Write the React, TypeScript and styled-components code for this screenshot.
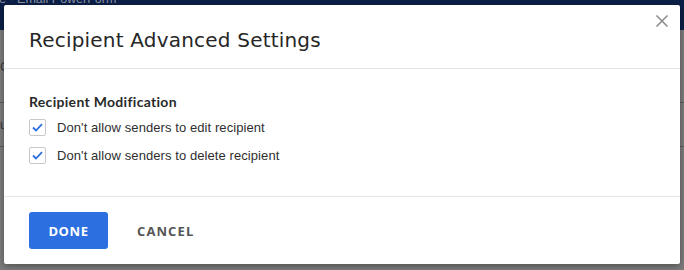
import React from "react";
import styled, { createGlobalStyle } from "styled-components";

const GlobalStyle = createGlobalStyle`
  html, body {
    margin: 0;
    padding: 0;
    width: 684px;
    height: 270px;
    overflow: hidden;
    background: #7a7a7a;
  }
  * {
    box-sizing: border-box;
  }
`;

const Page = styled.div`
  position: relative;
  width: 684px;
  height: 270px;
  overflow: hidden;
`;

const Backdrop = styled.div`
  display: flex;
  flex-direction: column;
  height: 100%;
  background: #7b7b7b;
`;

const TopBar = styled.div`
  height: 30px;
  background: #0c1f47;
  overflow: hidden;
`;

const TopTitle = styled.div`
  margin-top: -8px;
  margin-left: -1px;
  font-family: "Liberation Sans", Arial, sans-serif;
  font-size: 12.5px;
  line-height: 14px;
  color: #8a93a6;
  white-space: nowrap;
`;

const BackRow = styled.div<{ $height: number }>`
  height: ${({ $height }) => $height}px;
  border-bottom: 1px solid #5c5c5c;
  font-family: "Liberation Sans", Arial, sans-serif;
  font-size: 13px;
  color: #3a3a3a;
  display: flex;
  align-items: center;
`;

const Modal = styled.div`
  position: absolute;
  left: 4px;
  top: 5px;
  width: 676px;
  height: 259px;
  background: #ffffff;
  border-radius: 2px;
  box-shadow: 0 2px 6px rgba(0, 0, 0, 0.35);
  display: flex;
  flex-direction: column;
`;

const Header = styled.div`
  height: 64px;
  padding: 0 25px;
  display: flex;
  align-items: center;
  border-bottom: 1px solid #e3e3e3;
`;

const Title = styled.h2`
  margin: 6px 0 0;
  font-family: "DejaVu Sans", sans-serif;
  font-weight: 400;
  font-size: 20px;
  letter-spacing: 0.2px;
  color: #262626;
`;

const CloseButton = styled.button`
  position: absolute;
  top: 9px;
  right: 11px;
  width: 14px;
  height: 14px;
  padding: 0;
  border: none;
  background: none;
  cursor: pointer;
  display: flex;
`;

const Body = styled.div`
  flex: 1;
  padding: 24px 25px 0;
  border-bottom: 1px solid #e6e6e6;
`;

const SectionTitle = styled.div`
  font-family: Lato, sans-serif;
  font-weight: 700;
  font-size: 14px;
  letter-spacing: 0.3px;
  color: #2a2a2a;
  margin-bottom: 3px;
`;

const CheckRow = styled.label`
  display: flex;
  align-items: center;
  gap: 11px;
  height: 28px;
`;

const Box = styled.span`
  width: 17px;
  height: 17px;
  border: 1px solid #c8c8c8;
  border-radius: 2px;
  display: flex;
  align-items: center;
  justify-content: center;
  background: #fff;
`;

const Label = styled.span`
  font-family: "Liberation Sans", Arial, sans-serif;
  font-size: 13px;
  letter-spacing: 0.08px;
  color: #2f2f2f;
`;

const Footer = styled.div`
  height: 67px;
  padding: 0 25px;
  display: flex;
  align-items: center;
  gap: 29px;
`;

const Button = styled.button<{ $primary?: boolean }>`
  height: 37px;
  padding: 0 ${({ $primary }) => ($primary ? "19px" : "0")};
  min-width: ${({ $primary }) => ($primary ? "79px" : "0")};
  border: none;
  border-radius: 3px;
  background: ${({ $primary }) => ($primary ? "#2b6fe0" : "transparent")};
  color: ${({ $primary }) => ($primary ? "#ffffff" : "#555555")};
  font-family: "Open Sans", sans-serif;
  font-weight: 700;
  font-size: 13px;
  letter-spacing: ${({ $primary }) => ($primary ? "0.6px" : "1.1px")};
  cursor: pointer;
`;

function Check() {
  return (
    <Box>
      <svg width="11" height="9" viewBox="0 0 11 9">
        <path d="M1 4.5 L4 7.5 L10 1.2" fill="none" stroke="#2b6fe0" strokeWidth="1.8" />
      </svg>
    </Box>
  );
}

export default function App() {
  return (
    <Page>
      <GlobalStyle />
      <Backdrop>
        <TopBar>
          <TopTitle>e - Email PowerForm</TopTitle>
        </TopBar>
        <BackRow $height={73}>C</BackRow>
        <BackRow $height={44}>u</BackRow>
      </Backdrop>
      <Modal>
        <CloseButton aria-label="Close">
          <svg width="14" height="14" viewBox="0 0 14 14">
            <path d="M1.5 1.5 L12.5 12.5 M12.5 1.5 L1.5 12.5" stroke="#8a8a8a" strokeWidth="1.5" />
          </svg>
        </CloseButton>
        <Header>
          <Title>Recipient Advanced Settings</Title>
        </Header>
        <Body>
          <SectionTitle>Recipient Modification</SectionTitle>
          <CheckRow>
            <Check />
            <Label>Don't allow senders to edit recipient</Label>
          </CheckRow>
          <CheckRow>
            <Check />
            <Label>Don't allow senders to delete recipient</Label>
          </CheckRow>
        </Body>
        <Footer>
          <Button $primary>DONE</Button>
          <Button>CANCEL</Button>
        </Footer>
      </Modal>
    </Page>
  );
}
